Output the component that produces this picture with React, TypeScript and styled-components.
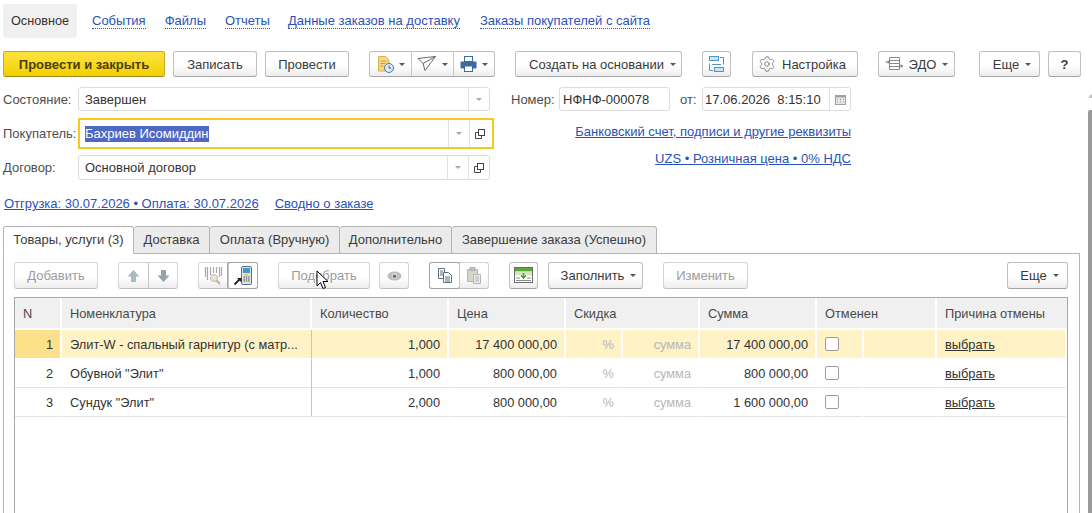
import React from 'react'
import styled, { createGlobalStyle } from 'styled-components'
import { Settings } from 'lucide-react'

const GlobalStyle = createGlobalStyle`
  html, body { margin: 0; padding: 0; background: #fff; overflow: hidden; }
  body { font-family: "Liberation Sans", Arial, sans-serif; font-size: 13px; color: #333; }
`

const Page = styled.div`
  position: relative;
  width: 1092px;
  height: 513px;
  overflow: hidden;
  padding-left: 3px;
  box-sizing: border-box;
`

const NavRow = styled.div`
  display: flex;
  align-items: center;
  height: 34px;
  margin-top: 4px;
`

const NavActive = styled.div`
  width: 74px;
  height: 34px;
  line-height: 34px;
  text-align: center;
  font-size: 12.7px;
  background: #f0f0f0;
  border-radius: 3px;
  color: #333;
  margin-right: 15px;
`

const NavLink = styled.a<{ $gap: number }>`
  color: #2a52b8;
  border-bottom: 1px dotted #2a52b8;
  line-height: 14px;
  margin-right: ${p => p.$gap}px;
`

const Toolbar = styled.div`
  display: flex;
  height: 26px;
  margin-top: 13px;
`

const PanelToolbar = styled.div`
  display: flex;
  height: 27px;
`

const Button = styled.div<{ $w: number; $ml?: number; $off?: boolean; $auto?: boolean; $pl?: number; $pr?: number }>`
  box-sizing: border-box;
  flex: none;
  width: ${p => p.$w}px;
  margin-left: ${p => (p.$auto ? 'auto' : `${p.$ml ?? 0}px`)};
  padding: 0 ${p => p.$pr ?? 0}px 0 ${p => p.$pl ?? 0}px;
  display: flex;
  align-items: center;
  justify-content: center;
  gap: 6px;
  background: linear-gradient(#ffffff 55%, #ededed);
  border: 1px solid ${p => (p.$off ? '#d4d4d4' : '#c0c0c0')};
  border-bottom-color: ${p => (p.$off ? '#c0c0c0' : '#a4a4a4')};
  border-radius: 3px;
  color: ${p => (p.$off ? '#9c9c9c' : '#3a3a3a')};
  white-space: nowrap;
`

const PrimaryButton = styled(Button)`
  background: linear-gradient(#ffe340, #f2d000);
  border-color: #c0a82a;
  border-bottom-color: #a08a20;
  color: #4a4013;
  font-weight: bold;
`

const Group = styled.div<{ $ml: number; $off?: boolean }>`
  display: flex;
  flex: none;
  margin-left: ${p => p.$ml}px;
  background: linear-gradient(#ffffff 55%, #ededed);
  border: 1px solid ${p => (p.$off ? '#d4d4d4' : '#c0c0c0')};
  border-bottom-color: ${p => (p.$off ? '#c0c0c0' : '#a4a4a4')};
  border-radius: 3px;
  box-sizing: border-box;
`

const GroupItem = styled.div<{ $w: number; $pressed?: boolean }>`
  box-sizing: border-box;
  width: ${p => p.$w}px;
  display: flex;
  align-items: center;
  justify-content: center;
  gap: 5px;
  border-left: 1px solid #c8c8c8;
  &:first-child { border-left: none; }
  ${p => p.$pressed && 'box-shadow: 0 0 0 1px #a4a4a4; border-radius: 2px; background: #fff;'}
`

const Caret = styled.span`
  flex: none;
  width: 0;
  height: 0;
  border-left: 3px solid transparent;
  border-right: 3px solid transparent;
  border-top: 3px solid #555;
`

const FormGrid = styled.div`
  display: flex;
  margin-top: 10px;
`

const LeftCol = styled.div`
  width: 491px;
  flex: none;
  display: flex;
  flex-direction: column;
`

const Field = styled.div<{ $h: number; $mt?: number }>`
  display: flex;
  align-items: center;
  height: ${p => p.$h}px;
  margin-top: ${p => p.$mt ?? 0}px;
`

const Label = styled.div`
  width: 75px;
  flex: none;
  color: #4d4d4d;
`

const Input = styled.div<{ $w?: number; $focus?: boolean }>`
  box-sizing: border-box;
  display: flex;
  align-items: stretch;
  width: ${p => (p.$w ? `${p.$w}px` : '412px')};
  flex: none;
  height: 100%;
  border: 1px solid #dcdcdc;
  border-radius: 3px;
  background: #fff;
  ${p => p.$focus && 'border: 2px solid #f8c81c; border-radius: 0; width: 416px; padding-right: 2px;'}
`

const InputText = styled.div<{ $pad?: number }>`
  flex: 1;
  display: flex;
  align-items: center;
  padding-left: ${p => p.$pad ?? 6}px;
  color: #333;
  white-space: nowrap;
`

const Selected = styled.span`
  background: #4f68c2;
  color: #fff;
  line-height: 16px;
`

const InputAddon = styled.div`
  width: 20px;
  flex: none;
  display: flex;
  align-items: center;
  justify-content: center;
  border-left: 1px solid #e2e2e2;
`

const LightCaret = styled(Caret)`
  border-top-color: #a8a8a8;
`

const RightCol = styled.div`
  margin-left: 17px;
  display: flex;
  flex-direction: column;
  width: 340px;
`

const NumberRow = styled.div`
  display: flex;
  align-items: center;
  height: 24px;
`

const RightLabel = styled.div<{ $w: number; $pl?: number }>`
  box-sizing: border-box;
  width: ${p => p.$w}px;
  padding-left: ${p => p.$pl ?? 0}px;
  flex: none;
  color: #4d4d4d;
`

const RightLink = styled.a<{ $mt: number }>`
  align-self: flex-end;
  margin-top: ${p => p.$mt}px;
  color: #2a52b8;
  text-decoration: underline;
  line-height: 14px;
`

const SummaryRow = styled.div`
  display: flex;
  gap: 16px;
  margin-top: 16px;
  padding-left: 1px;
  line-height: 16px;
`

const SummaryLink = styled.a`
  color: #2a52b8;
  text-decoration: underline;
`

const TabBar = styled.div`
  display: flex;
  margin-top: 14px;
  height: 28px;
  position: relative;
  z-index: 1;
`

const Tab = styled.div<{ $w: number; $active?: boolean }>`
  box-sizing: border-box;
  width: ${p => p.$w}px;
  flex: none;
  text-align: center;
  line-height: 26px;
  white-space: nowrap;
  border: 1px solid #b4b4b4;
  border-left-width: ${p => (p.$active ? 1 : 0)}px;
  border-bottom-color: ${p => (p.$active ? '#fff' : '#b4b4b4')};
  border-radius: 3px 3px 0 0;
  background: ${p => (p.$active ? '#fff' : '#ebebeb')};
  color: #3c3c3c;
`

const Panel = styled.div`
  box-sizing: border-box;
  width: 1077px;
  height: 320px;
  margin-top: -1px;
  border: 1px solid #b4b4b4;
  padding: 8px 11px 8px 10px;
`

const TableBox = styled.div`
  box-sizing: border-box;
  margin-top: 8px;
  width: 1054px;
  height: 300px;
  border: 1px solid #a8a8a8;
`

const Grid = styled.table`
  border-collapse: separate;
  border-spacing: 0;
  table-layout: fixed;
  width: 1052px;
  font-size: 12.8px;
`

const Col = styled.col<{ $w: number }>`
  width: ${p => p.$w}px;
`

const Head = styled.th`
  height: 32px;
  padding: 0 0 0 8px;
  box-sizing: border-box;
  background: #f0f0f0;
  border-right: 2px solid #fff;
  border-bottom: 2px solid #fff;
  font-weight: normal;
  text-align: left;
  color: #4a4a4a;
  white-space: nowrap;
  &:last-child { border-right: none; }
`

const Row = styled.tr<{ $current?: boolean }>`
  & > td {
    background: ${p => (p.$current ? '#fef2c6' : '#fff')};
    border-bottom: 1px solid ${p => (p.$current ? '#fff' : '#e4e4e4')};
    border-right: 2px solid #fff;
  }
  & > td:first-child {
    background: ${p => (p.$current ? '#fde08a' : '#fff')};
  }
`

const Cell = styled.td<{ $align?: string; $muted?: boolean; $rule?: boolean }>`
  height: 29px;
  box-sizing: border-box;
  padding: 0 7px 0 8px;
  text-align: ${p => p.$align ?? 'left'};
  color: ${p => (p.$muted ? '#b8b8b8' : '#333')};
  white-space: nowrap;
  ${p => p.$rule && 'border-right: 1px solid #c4c4c4 !important;'}
`

const Check = styled.div`
  box-sizing: border-box;
  width: 14px;
  height: 14px;
  border: 1px solid #9c9c9c;
  border-radius: 2px;
  background: #fff;
`

const ChooseLink = styled.a`
  color: #333;
  text-decoration: underline;
`

const ScrollTrack = styled.div`
  position: absolute;
  right: 0;
  top: 94px;
  bottom: 0;
  width: 5px;
`

const ScrollArrow = styled.div`
  width: 0;
  height: 0;
  margin-left: 1px;
  border-left: 3px solid transparent;
  border-right: 3px solid transparent;
  border-bottom: 4px solid #c4c4c4;
`

const ScrollThumb = styled.div`
  position: absolute;
  top: 16px;
  bottom: 0;
  left: 1px;
  right: 0;
  background: #9a9a9a;
  border-radius: 2px 0 0 0;
`

const Pointer = styled.svg`
  position: absolute;
  left: 316px;
  top: 270px;
`

const DocClockIcon = () => (
  <svg width="17" height="18" viewBox="0 0 17 18">
    <path d="M1.500 1.500h7l3.500 3.500v11h-10.500z" fill="#f4d98a" stroke="#dcae4a" />
    <path d="M3.500 6h6M3.500 8.500h5M3.500 11h3" stroke="#c99d3c" />
    <circle cx="12" cy="13" r="4.500" fill="#dfe9f4" stroke="#3f78b8" />
    <path d="M12 10.500v2.500" stroke="#d23a3a" />
    <path d="M12 13h2" stroke="#2f5f98" />
  </svg>
)

const SendIcon = () => (
  <svg width="20" height="18" viewBox="0 0 20 18" fill="none" stroke="#666">
    <path d="M1 3.500 18.500 1.500 8 15.500 6 8.500z" />
    <path d="M6 8.500 18.500 1.500" />
  </svg>
)

const PrintIcon = () => (
  <svg width="17" height="16" viewBox="0 0 17 16">
    <rect x="4.500" y="0.500" width="8" height="5" fill="#fff" stroke="#3c6c9c" />
    <rect x="0.500" y="5.500" width="16" height="7" rx="1" fill="#3c6c9c" />
    <rect x="4.500" y="10" width="8" height="5.500" fill="#fff" stroke="#3c6c9c" />
  </svg>
)

const StructureIcon = () => (
  <svg width="17" height="18" viewBox="0 0 17 18" fill="none" stroke="#4f96c6">
    <rect x="1.500" y="1.500" width="9" height="4" fill="#cfe3f1" />
    <rect x="6.500" y="12.500" width="9" height="4" fill="#cfe3f1" />
    <path d="M12 2.500h3.500v7M5 15.500H1.500v-7M4 9.500h9" />
  </svg>
)

const EdoIcon = () => (
  <svg width="18" height="17" viewBox="0 0 18 17" fill="none" stroke="#8a8a8a">
    <path d="M4.500 1.500h10M4.500 4.500h10M4.500 7.500h10M4.500 10.500h10M4.500 13.500h10M4.500 1.500v12M14.500 1.500v12" />
    <path d="M0.500 6h4M3 4.500 4.500 6 3 7.500M14 10h3.500M16 8.500 17.500 10 16 11.500" stroke="#666" />
  </svg>
)

const OpenIcon = () => (
  <svg width="10" height="10" viewBox="0 0 10 10" fill="none" stroke="#444">
    <rect x="3.500" y="0.500" width="6" height="6" />
    <path d="M3.500 3.500h-3v6h6v-3" />
  </svg>
)

const CalendarIcon = () => (
  <svg width="11" height="11" viewBox="0 0 11 11">
    <rect x="0.500" y="1.500" width="10" height="9" fill="#e8e8e8" stroke="#a0a0a0" />
    <rect x="0.500" y="1.500" width="10" height="2" fill="#a0a0a0" />
    <path d="M2 5.500h1M5 5.500h1M8 5.500h1M2 8h1M5 8h1M8 8h1" stroke="#8c8c8c" />
  </svg>
)

const UpArrowIcon = () => (
  <svg width="13" height="14" viewBox="0 0 13 14">
    <path d="M6.500 1 12.500 7.500H9V13H4V7.500H0.500z" fill="#a6bac2" />
  </svg>
)

const DownArrowIcon = () => (
  <svg width="13" height="14" viewBox="0 0 13 14">
    <path d="M6.500 13 12.500 6.500H9V1H4V6.500H0.500z" fill="#98a4a8" />
  </svg>
)

const BarcodeIcon = () => (
  <svg width="21" height="20" viewBox="0 0 21 20">
    <path d="M2.500 1v10M4.500 1v13M7.500 1v8M10.500 1v6M13.500 1v6M16.500 1v10M18.500 1v9" stroke="#a8a8a8" strokeWidth="1.200" />
    <circle cx="11" cy="12" r="3.500" fill="#ece6da" stroke="#c0baac" />
    <path d="M13.500 14.500 17 18" stroke="#cfae7c" strokeWidth="2" />
  </svg>
)

const TerminalIcon = () => (
  <svg width="20" height="22" viewBox="0 0 20 22">
    <rect x="8.500" y="1.500" width="10" height="18" rx="1.500" fill="#dfe6ea" stroke="#59707c" />
    <rect x="10" y="3" width="7" height="5" fill="#3e9ad6" />
    <rect x="11.500" y="9" width="4" height="1.500" fill="#f4c020" />
    <path d="M10.500 12h6M10.500 14h6M10.500 16h6" stroke="#4a4a4a" strokeWidth="1.200" strokeDasharray="1.500 0.800" />
    <path d="M1.500 19.500 6.500 14.500" stroke="#222" strokeWidth="1.800" />
    <path d="M4 13h4.500v4.500z" fill="#222" />
  </svg>
)

const EyeIcon = () => (
  <svg width="15" height="10" viewBox="0 0 15 10">
    <ellipse cx="7.500" cy="5" rx="7" ry="4.500" fill="#bdbdbd" />
    <circle cx="7.500" cy="5" r="2.800" fill="#e4e4e4" />
    <circle cx="7.500" cy="5.300" r="1.800" fill="#6c6c6c" />
  </svg>
)

const CopyIcon = () => (
  <svg width="16" height="17" viewBox="0 0 16 17" fill="#fff" stroke="#5e6f7c">
    <path d="M1.500 1.500h6v10h-6z" />
    <path d="M3 4h3M3 6h3M3 8h3" />
    <path d="M6.500 5.500h5l3 3v7h-8z" />
    <path d="M8 10h5M8 12h5M8 14h5" />
  </svg>
)

const PasteIcon = () => (
  <svg width="16" height="18" viewBox="0 0 16 18" fill="#d8d4cc" stroke="#b4b4b4">
    <path d="M1.500 2.500h10v12h-10z" />
    <rect x="4" y="0.500" width="5" height="3" fill="#c0c0c0" />
    <path d="M7.500 7.500h7v9h-7z" fill="#ececec" />
    <path d="M9 10h4M9 12h4M9 14h4" />
  </svg>
)

const FillIcon = () => (
  <svg width="19" height="17" viewBox="0 0 19 17">
    <rect x="0.500" y="0.500" width="18" height="15" fill="#fff" stroke="#6a6a6a" />
    <rect x="1" y="1" width="17" height="3.500" fill="#5aa83c" />
    <rect x="1" y="4.500" width="17" height="4" fill="#cfe8b8" />
    <path d="M9.500 6v5M7 8.500l2.500 2.500L12 8.500" stroke="#3c9a3c" fill="none" strokeWidth="1.400" />
    <path d="M2 11h4M13 11h4M2 13.500h15" stroke="#8a8a8a" />
  </svg>
)

const colWidths = [47, 250, 137, 117, 57, 77, 117, 47, 73, 130]

const rows = [
  { n: '1', name: 'Элит-W - спальный гарнитур (с матр...', qty: '1,000', price: '17 400 000,00', sum: '17 400 000,00', current: true },
  { n: '2', name: 'Обувной "Элит"', qty: '1,000', price: '800 000,00', sum: '800 000,00' },
  { n: '3', name: 'Сундук "Элит"', qty: '2,000', price: '800 000,00', sum: '1 600 000,00' },
]

export default function App() {
  return (
    <Page>
      <GlobalStyle />
      <NavRow>
        <NavActive>Основное</NavActive>
        <NavLink $gap={19}>События</NavLink>
        <NavLink $gap={19}>Файлы</NavLink>
        <NavLink $gap={18}>Отчеты</NavLink>
        <NavLink $gap={20}>Данные заказов на доставку</NavLink>
        <NavLink $gap={0}>Заказы покупателей с сайта</NavLink>
      </NavRow>

      <Toolbar>
        <PrimaryButton $w={162}>Провести и закрыть</PrimaryButton>
        <Button $w={84} $ml={8}>Записать</Button>
        <Button $w={84} $ml={8}>Провести</Button>
        <Group $ml={20}>
          <GroupItem $w={41}><DocClockIcon /><Caret /></GroupItem>
          <GroupItem $w={42}><SendIcon /><Caret /></GroupItem>
          <GroupItem $w={41}><PrintIcon /><Caret /></GroupItem>
        </Group>
        <Button $w={167} $ml={20} $pl={8}>Создать на основании <Caret /></Button>
        <Button $w={29} $ml={20}><StructureIcon /></Button>
        <Button $w={106} $ml={21} $pr={6}><Settings size={18} strokeWidth={1} color="#666" />Настройка</Button>
        <Button $w={77} $ml={20}><EdoIcon />ЭДО <Caret /></Button>
        <Button $w={61} $ml={24} $pl={5}>Еще <Caret /></Button>
        <Button $w={33} $ml={8}><b>?</b></Button>
      </Toolbar>

      <FormGrid>
        <LeftCol>
          <Field $h={24}>
            <Label>Состояние:</Label>
            <Input>
              <InputText>Завершен</InputText>
              <InputAddon><LightCaret /></InputAddon>
            </Input>
          </Field>
          <Field $h={31} $mt={7}>
            <Label>Покупатель:</Label>
            <Input $focus>
              <InputText $pad={5}><Selected>Бахриев Исомиддин</Selected></InputText>
              <InputAddon><LightCaret /></InputAddon>
              <InputAddon><OpenIcon /></InputAddon>
            </Input>
          </Field>
          <Field $h={25} $mt={6}>
            <Label>Договор:</Label>
            <Input>
              <InputText>Основной договор</InputText>
              <InputAddon><LightCaret /></InputAddon>
              <InputAddon><OpenIcon /></InputAddon>
            </Input>
          </Field>
        </LeftCol>
        <RightCol>
          <NumberRow>
            <RightLabel $w={48}>Номер:</RightLabel>
            <Input $w={111}><InputText $pad={3}>НФНФ-000078</InputText></Input>
            <RightLabel $w={32} $pl={10}>от:</RightLabel>
            <Input $w={149}>
              <InputText $pad={2}>17.06.2026&nbsp;&nbsp;8:15:10</InputText>
              <InputAddon><CalendarIcon /></InputAddon>
            </Input>
          </NumberRow>
          <RightLink $mt={14}>Банковский счет, подписи и другие реквизиты</RightLink>
          <RightLink $mt={13}>UZS • Розничная цена • 0% НДС</RightLink>
        </RightCol>
      </FormGrid>

      <SummaryRow>
        <SummaryLink>Отгрузка: 30.07.2026 • Оплата: 30.07.2026</SummaryLink>
        <SummaryLink>Сводно о заказе</SummaryLink>
      </SummaryRow>

      <TabBar>
        <Tab $w={131} $active>Товары, услуги (3)</Tab>
        <Tab $w={76}>Доставка</Tab>
        <Tab $w={130}>Оплата (Вручную)</Tab>
        <Tab $w={112}>Дополнительно</Tab>
        <Tab $w={205}>Завершение заказа (Успешно)</Tab>
      </TabBar>

      <Panel>
        <PanelToolbar>
          <Button $w={84} $off>Добавить</Button>
          <Group $ml={20} $off>
            <GroupItem $w={29}><UpArrowIcon /></GroupItem>
            <GroupItem $w={29}><DownArrowIcon /></GroupItem>
          </Group>
          <Group $ml={20} $off>
            <GroupItem $w={29}><BarcodeIcon /></GroupItem>
            <GroupItem $w={29} $pressed><TerminalIcon /></GroupItem>
          </Group>
          <Button $w={92} $ml={20} $off>Подобрать</Button>
          <Button $w={30} $ml={9} $off><EyeIcon /></Button>
          <Group $ml={20} $off>
            <GroupItem $w={29} $pressed><CopyIcon /></GroupItem>
            <GroupItem $w={29}><PasteIcon /></GroupItem>
          </Group>
          <Button $w={29} $ml={20}><FillIcon /></Button>
          <Button $w={95} $ml={10} $pl={6}>Заполнить <Caret /></Button>
          <Button $w={85} $ml={20} $off>Изменить</Button>
          <Button $w={61} $auto $pl={4}>Еще <Caret /></Button>
        </PanelToolbar>

        <TableBox>
          <Grid>
            <colgroup>
              {colWidths.map((w, i) => <Col key={i} $w={w} />)}
            </colgroup>
            <thead>
              <tr>
                <Head>N</Head>
                <Head>Номенклатура</Head>
                <Head>Количество</Head>
                <Head>Цена</Head>
                <Head colSpan={2}>Скидка</Head>
                <Head>Сумма</Head>
                <Head colSpan={2}>Отменен</Head>
                <Head>Причина отмены</Head>
              </tr>
            </thead>
            <tbody>
              {rows.map(r => (
                <Row key={r.n} $current={r.current}>
                  <Cell $align="right">{r.n}</Cell>
                  <Cell $rule>{r.name}</Cell>
                  <Cell $align="right">{r.qty}</Cell>
                  <Cell $align="right">{r.price}</Cell>
                  <Cell $align="right" $muted>%</Cell>
                  <Cell $align="right" $muted>сумма</Cell>
                  <Cell $align="right">{r.sum}</Cell>
                  <Cell><Check /></Cell>
                  <Cell />
                  <Cell><ChooseLink>выбрать</ChooseLink></Cell>
                </Row>
              ))}
            </tbody>
          </Grid>
        </TableBox>
      </Panel>

      <ScrollTrack>
        <ScrollArrow />
        <ScrollThumb />
      </ScrollTrack>

      <Pointer width="14" height="20" viewBox="0 0 14 20">
        <path d="M1 1v15l3.500-3.500 2.500 6 2.500-1-2.500-6h5z" fill="#fff" stroke="#000" />
      </Pointer>
    </Page>
  )
}
